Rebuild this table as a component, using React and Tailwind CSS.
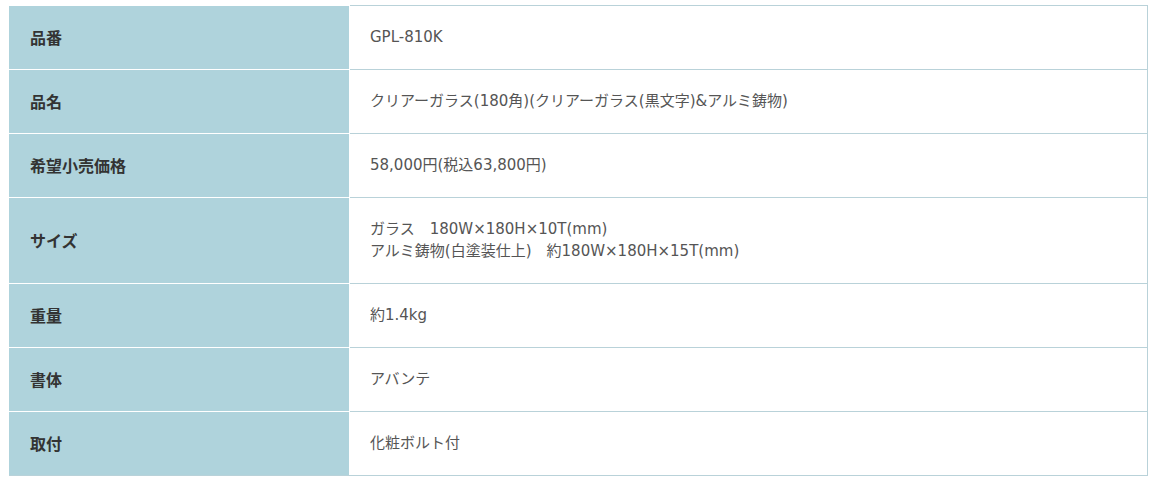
const rows = [
  ["品番", ["GPL-810K"]],
  ["品名", ["クリアーガラス(180角)(クリアーガラス(黒文字)&アルミ鋳物)"]],
  ["希望小売価格", ["58,000円(税込63,800円)"]],
  ["サイズ", ["ガラス　180W×180H×10T(mm)", "アルミ鋳物(白塗装仕上)　約180W×180H×15T(mm)"]],
  ["重量", ["約1.4kg"]],
  ["書体", ["アバンテ"]],
  ["取付", ["化粧ボルト付"]],
];

export default function App() {
  return (
    <div
      className="bg-white w-[1155px] h-[486px] pt-[5px] pl-[9px]"
      style={{ fontFamily: '"Noto Sans CJK JP", "Noto Sans", sans-serif' }}
    >
      <div className="w-[1139px] flex flex-col border-b border-[#b9d2d9]">
        {rows.map(([h, v]) => (
          <div key={h} className="flex">
            <div className="w-[341px] shrink-0 flex items-center bg-[#afd3dc] border-t border-r border-white pl-[21px] pb-[1px] text-[16px] leading-[22px] font-bold text-[#333]">
              {h}
            </div>
            <div
              className="flex-1 border-t border-r border-[#b9d2d9] pl-5 pt-[20px] pb-[21px] text-[15px] leading-[22px] text-[#555]"
              style={{ fontFamily: '"DejaVu Sans", "Noto Sans CJK JP", sans-serif' }}
            >
              {v.map((line) => (
                <div key={line}>{line}</div>
              ))}
            </div>
          </div>
        ))}
      </div>
    </div>
  );
}
